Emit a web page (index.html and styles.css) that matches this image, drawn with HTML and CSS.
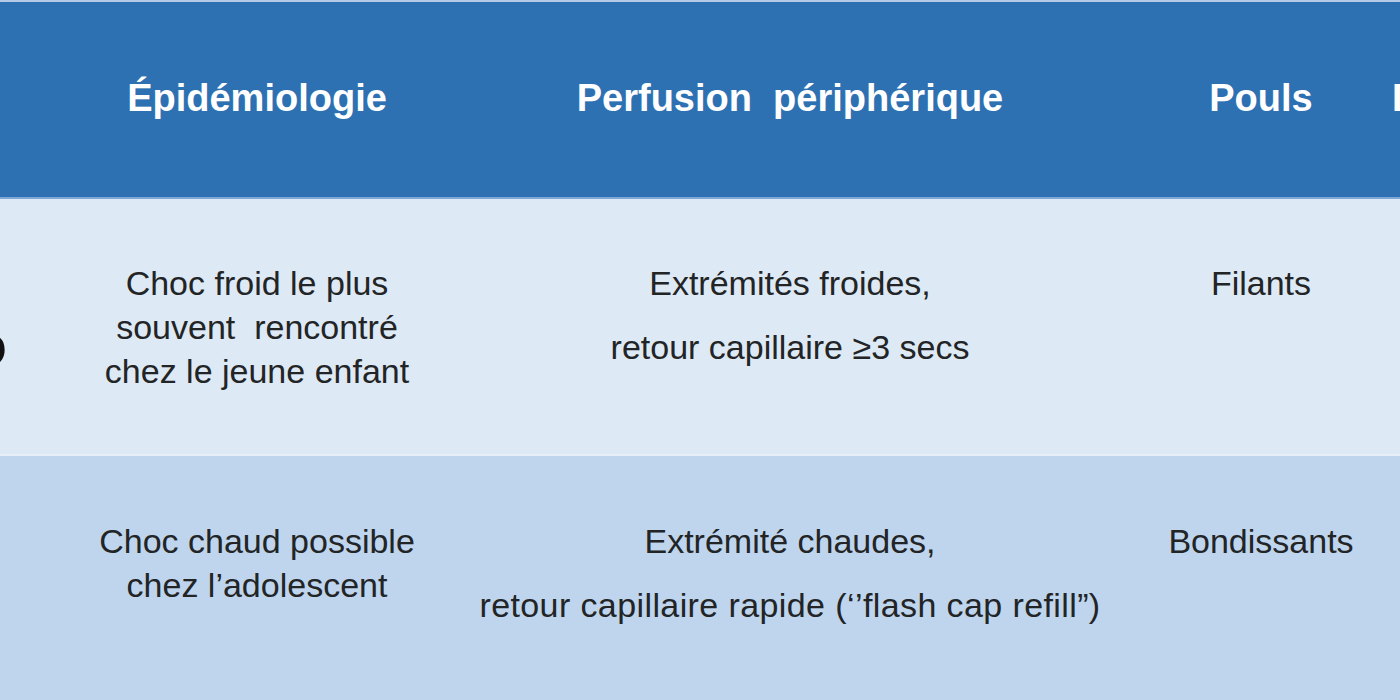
FILE: index.html
```html
<!DOCTYPE html>
<html lang="fr">
<head>
<meta charset="utf-8">
<title>Choc</title>
<link rel="stylesheet" href="styles.css">
</head>
<body>
<div class="table">
  <div class="cell head c0"></div>
  <div class="cell head c1">Épidémiologie</div>
  <div class="cell head c2">Perfusion&nbsp; périphérique</div>
  <div class="cell head c3">Pouls</div>
  <div class="cell head c4">Diurèse</div>

  <div class="cell r1 c0"><span class="label">o</span></div>
  <div class="cell r1 c1"><p>Choc froid le plus<br>souvent&nbsp; rencontré<br>chez le jeune enfant</p></div>
  <div class="cell r1 c2"><p>Extrémités froides,</p><p>retour capillaire ≥3 secs</p></div>
  <div class="cell r1 c3"><p>Filants</p></div>
  <div class="cell r1 c4"></div>

  <div class="cell r2 c0"></div>
  <div class="cell r2 c1"><p>Choc chaud possible<br>chez l’adolescent</p></div>
  <div class="cell r2 c2"><p>Extrémité chaudes,</p><p class="long">retour capillaire rapide (‘’flash cap refill”)</p></div>
  <div class="cell r2 c3"><p>Bondissants</p></div>
  <div class="cell r2 c4"></div>
</div>
</body>
</html>
```

FILE: styles.css
```css
html, body {
  margin: 0;
  padding: 0;
  width: 1400px;
  height: 700px;
  overflow: hidden;
  background: #ffffff;
}

.table {
  display: grid;
  grid-template-columns: 120px 474px 642px 250px 300px;
  grid-template-rows: 197px 257px 260px;
  margin-left: -100px;
  border-top: 2px solid #b3cbe7;
  font-family: "Liberation Sans", Arial, sans-serif;
}

.cell {
  text-align: center;
  color: #222426;
  font-size: 34px;
  line-height: 44px;
}

.cell p {
  margin: 0 0 20px 0;
  white-space: nowrap;
}

.head {
  background: #2e71b2;
  color: #ffffff;
  font-weight: bold;
  font-size: 38px;
  display: flex;
  align-items: center;
  justify-content: center;
  border-bottom: 2px solid #7ea9d6;
  padding-bottom: 4px;
  white-space: nowrap;
}

.head.c4 {
  justify-content: flex-start;
  padding-left: 6px;
}

.r1 {
  background: #dde9f5;
  padding-top: 62px;
  border-bottom: 2px solid #e6eef8;
}

.r2 {
  background: #bed5ed;
  padding-top: 63px;
}

.c2 {
  padding-right: 50px;
  display: flex;
  flex-direction: column;
  align-items: center;
}

.head.c2 {
  flex-direction: row;
}

.c2 p.long {
  letter-spacing: 0.4px;
}

.r1.c0 {
  text-align: right;
  padding-top: 117px;
  padding-right: 13px;
}

.label {
  font-weight: bold;
  font-size: 58px;
  line-height: 58px;
  color: #111111;
}
```
